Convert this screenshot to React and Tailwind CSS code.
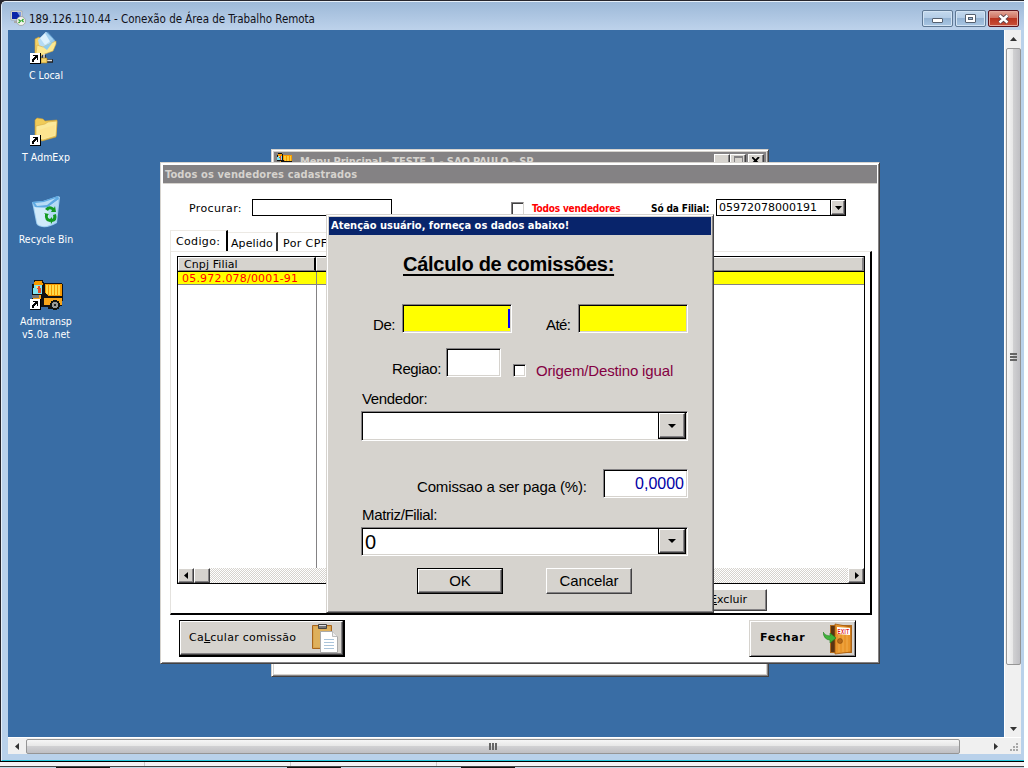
import React from "react";

const raised =
  "border border-t-white border-l-white border-r-[#424142] border-b-[#424142] shadow-[inset_-1px_-1px_0_#848284] bg-[#d6d3ce]";
const frame =
  "border border-t-[#d6d3ce] border-l-[#d6d3ce] border-r-[#424142] border-b-[#424142] shadow-[inset_1px_1px_0_#fff,inset_-1px_-1px_0_#848284]";
const sunken =
  "border border-t-[#848284] border-l-[#848284] border-r-white border-b-white shadow-[inset_1px_1px_0_#000,inset_-1px_-1px_0_#d6d3ce]";
const tahoma = "font-['DejaVu_Sans_Condensed','DejaVu_Sans',sans-serif]";
const verdana = "font-['DejaVu_Sans',sans-serif]";
const arial = "font-['Liberation_Sans',Arial,sans-serif]";

function ShortcutArrow() {
  return (
    <g shapeRendering="crispEdges">
      <path d="M0 21h11v11H0z" fill="#000" />
      <path d="M0 21h10v10H0z" fill="#fff" />
      <path d="M3 23h5v5h-1v-2h-1v1h-1v1h-1v2h-2v-3h1v-1h1v-1h1v-1h-2z" fill="#000" />
    </g>
  );
}

function NetworkFolderIcon() {
  return (
    <svg width="32" height="32" viewBox="0 0 32 32" className="overflow-visible">
      <path d="M5 7l4-2 3 3v12l3 2-5 3-5-3z" fill="#f3d268" stroke="#c99b32" strokeWidth=".6" />
      <path d="M8 8L16 0l9 9-3 7-12 1z" fill="#b5dcf5" />
      <path d="M10 6l6-6 7 7-8 6z" fill="#def2fd" />
      <path d="M15 1l3-1 7 8-3 5z" fill="#7fbdea" opacity=".6" />
      <path d="M7 13l6 2 13-6v3l-3 7-11 4-6-1z" fill="#fbe892" stroke="#d9ad45" strokeWidth=".6" />
      <path d="M13 15l10-5-6 8z" fill="#8ecbee" />
      <path d="M14 23v4M11 29h12" stroke="#222" strokeWidth="3.600" />
      <path d="M14 22v5M12 28.500h10" stroke="#ddd" strokeWidth="1.600" />
      <path d="M11 26h6v5h-6z" fill="#f5d468" stroke="#a87916" strokeWidth=".6" />
      <ShortcutArrow />
    </svg>
  );
}

function FolderIcon() {
  return (
    <svg width="32" height="32" viewBox="0 0 32 32" className="overflow-visible">
      <path d="M5 6l2-2 6 1 2 2 12-1v3l-1 14-14 4-7-4z" fill="#f0cb58" stroke="#c99b32" strokeWidth=".6" />
      <path d="M6 12l9-2 3-2 9-1-1 15-13 4-7-2z" fill="#fbe99a" stroke="#d5ab43" strokeWidth=".6" />
      <path d="M9 16l16-5-1 10-12 4z" fill="#fce08a" opacity=".7" />
      <ShortcutArrow />
    </svg>
  );
}

function RecycleIcon() {
  return (
    <svg width="32" height="32" viewBox="0 0 32 32" className="overflow-visible">
      <path d="M2 6l11-1L28 0l2 1-3 26q-8 5-15 4-6-1-6-5z" fill="#9dcdf0" />
      <path d="M2 6l11-1L28 0l1 3-11 8-12 1z" fill="#5ea9e2" />
      <path d="M5 7l9-1 12-4-9 7-10 1z" fill="#b8dcf6" />
      <path d="M4 11l13 1 11-8-2 22q-8 5-14 4-5-1-5-4z" fill="#d9eefb" opacity=".85" />
      <path d="M18 12l10-8-2 22-6 3z" fill="#aed6f3" opacity=".8" />
      <path d="M15 13q4-5 9-1l1-2 1 6-5 0 1-2q-3-2-4 1zM14 17l5 1-1 1q-1 3 2 4v3q-6-1-5-8zM26 18q2 7-4 8v2l-3-4 3-3v2q2-1 1-4z" fill="#149a22" />
    </svg>
  );
}

function TruckArt() {
  return (
    <g>
      <path d="M3 0h9v2h1v1h18v1h1v17h-1v5h-3v3H17v-2H1V4h2z" fill="#111" />
      <path d="M4 1h7v2h1v2H3V2h1z" fill="#f79a00" />
      <path d="M3 5h8v9H2V8h1z" fill="#7fe3f0" />
      <path d="M6 6h3v2h1v5H7V9H6z" fill="#e44b2a" />
      <path d="M5 6h2v2H5z" fill="#ffe27a" />
      <path d="M14 4h17v12H18l-4-3z" fill="#f79a00" />
      <path d="M16 5v9M19 5v10M22 5v10M25 5v10M28 5v10" stroke="#ffdc4a" strokeWidth="1.5" />
      <path d="M2 15h8v11H2zM13 18h18v7H13z" fill="#f7a51a" />
      <path d="M1 15h7v3H1z" fill="#777" />
      <circle cx="24" cy="25" r="5" fill="#111" />
      <circle cx="24" cy="25" r="3" fill="#999" />
      <circle cx="24" cy="25" r="1.3" fill="#222" />
    </g>
  );
}

function TruckIcon() {
  return (
    <svg width="32" height="32" viewBox="0 0 32 32" shapeRendering="crispEdges" className="overflow-visible">
      <g transform="translate(1 2)">
        <TruckArt />
      </g>
      <ShortcutArrow />
    </svg>
  );
}

function ClipboardIcon() {
  return (
    <svg width="28" height="32" viewBox="0 0 28 32">
      <path d="M1.500 3.500h19v23h-19z" fill="#d9a550" stroke="#a8651c" />
      <path d="M3 5h16v20H3z" fill="#deb05c" />
      <path d="M7.500 2.500h8v4h-8z" fill="#777" stroke="#444" />
      <path d="M8 3h7v1H8z" fill="#ddd" />
      <path d="M9.500 9.500h12l5 5v16h-17z" fill="#fff" stroke="#aaa" />
      <path d="M21.500 9.500v5h5" fill="#eee" stroke="#bbb" />
      <path d="M13 17.500h10M13 20.500h10M13 23.500h10M13 26.500h10" stroke="#aac4da" />
    </svg>
  );
}

function ExitDoorIcon() {
  return (
    <svg width="30" height="32" viewBox="0 0 30 32">
      <path d="M7 2h22v28H7z" fill="#b06a1c" />
      <path d="M8 3h6v26H8z" fill="#5a3413" />
      <path d="M12 1l16 3v25l-16 2z" fill="#e8952b" stroke="#a55a10" strokeWidth=".8" />
      <path d="M16 5v24M20 5v24M24 5v24" stroke="#f2ad4d" strokeWidth="1" />
      <path d="M14 4l13 1v7l-13-1z" fill="#fff" />
      <text x="14.500" y="10.500" fontSize="6.500" fontWeight="bold" fill="#e01818" textLength="12" lengthAdjust="spacingAndGlyphs" fontFamily="Liberation Sans, sans-serif">EXIT</text>
      <circle cx="17" cy="18" r="2.500" fill="#b86a18" stroke="#7a4208" strokeWidth=".5" />
      <path d="M0 9q2 4 7 4v-3l6 5-6 5v-3Q1 17 0 9z" fill="#3fb33a" stroke="#1f7d1d" strokeWidth=".6" />
    </svg>
  );
}

function RemoteIcon() {
  return (
    <svg width="16" height="16" viewBox="0 0 16 16" className="mt-[3px]">
      <path d="M1 1h11v9H1z" fill="#e7e7e2" stroke="#999" strokeWidth=".6" />
      <path d="M2 2h9v7H2z" fill="#0a24a8" />
      <path d="M7 2h4v6z" fill="#7f9be0" />
      <path d="M4 11h5v2H4z" fill="#aaa" />
      <circle cx="11" cy="11" r="4.500" fill="#f3f3ee" stroke="#888" strokeWidth=".6" />
      <path d="M8.500 9.500l2 1.500-2 2M13.500 9L12 10.500l1.500 1.500" fill="none" stroke="#27a327" strokeWidth="1.200" />
    </svg>
  );
}

function Triangle({ dir, className = "" }) {
  const d = {
    left: "M5 0v7L1 3.500z",
    right: "M2 0v7l4-3.500z",
    up: "M0 5h7L3.500 1z",
    down: "M0 2h7L3.500 6z",
  }[dir];
  return (
    <svg width="7" height="7" viewBox="0 0 7 7" className={className}>
      <path d={d} fill="currentColor" />
    </svg>
  );
}

function DesktopItem({ icon, children }) {
  return (
    <div className={`flex h-[82px] w-[76px] flex-col items-center text-center text-[10.5px] leading-[13px] text-white ${tahoma}`}>
      {icon}
      <div className="mt-[5px] whitespace-nowrap">{children}</div>
    </div>
  );
}

function MenuWindow() {
  return (
    <div className={`absolute top-[119px] left-[263px] h-[528px] w-[498px] bg-white p-px ${frame}`}>
      <div className="flex h-full flex-col border border-[#d6d3ce]">
        <div className="flex h-[18px] shrink-0 bg-[#848284]">
          <svg width="16" height="16" viewBox="0 0 32 32" className="mt-px ml-[2px]" shapeRendering="crispEdges">
            <TruckArt />
          </svg>
          <div className={`ml-[8px] flex-1 text-[11px] leading-[20px] font-bold tracking-[-0.1px] whitespace-nowrap text-[#d6d3ce] ${tahoma}`}>
            Menu Principal - TESTE 1 - SAO PAULO - SP
          </div>
          <div className={`mt-[2px] h-[14px] w-[16px] ${raised}`} />
          <div className={`mt-[2px] flex h-[14px] w-[16px] justify-center pt-px ${raised}`}>
            <div className="h-[9px] w-[9px] border border-t-2 border-[#848284]" />
          </div>
          <div className={`mt-[2px] mr-[2px] ml-[2px] flex h-[14px] w-[16px] justify-center pt-[2px] ${raised}`}>
            <svg width="8" height="7" viewBox="0 0 8 7">
              <path d="M0 0l7 7M7 0L0 7" stroke="#000" strokeWidth="1.8" />
            </svg>
          </div>
        </div>
      </div>
    </div>
  );
}

function GridScroll() {
  return (
    <div className="flex h-[15px] bg-[repeating-conic-gradient(#d6d3ce_0_25%,#fff_0_50%)] bg-size-[2px_2px]">
      <div className={`flex w-[16px] items-center justify-center ${raised}`}><Triangle dir="left" /></div>
      <div className={`w-[16px] ${raised}`} />
      <div className="flex-1" />
      <div className={`flex w-[16px] items-center justify-center ${raised}`}><Triangle dir="right" /></div>
    </div>
  );
}

function SellersWindow() {
  return (
    <div className={`absolute top-[132px] left-[152px] flex h-[502px] w-[720px] flex-col bg-white p-[2px] ${frame}`}>
      <div className={`h-[19px] shrink-0 border-b border-[#d6d3ce] bg-[#848284] pl-[2px] text-[11px] leading-[19px] font-bold tracking-[0.12px] text-[#d6d3ce] ${tahoma}`}>
        Todos os vendedores cadastrados
      </div>
      <div className="mt-[15px] flex h-[17px] shrink-0 whitespace-nowrap">
        <div className={`w-[63px] shrink-0 pt-[3px] pl-[26px] text-[11px] leading-[14px] tracking-[0.35px] ${verdana}`}>
          Procurar:
        </div>
        <div className="ml-[26px] h-[17px] w-[140px] border border-black" />
        <div className="mt-[3px] ml-[119px] h-[13px] w-[13px] border border-t-[#848284] border-r-[#d6d3ce] border-b-[#d6d3ce] border-l-[#848284] shadow-[inset_1px_1px_0_#424142]" />
        <div className={`ml-[8px] w-[119px] pt-[3px] text-[10px] leading-[14px] font-bold tracking-[-0.2px] text-[#f00] ${tahoma}`}>
          Todos vendedores
        </div>
        <div className={`w-[65px] pt-[3px] text-[10px] leading-[14px] font-bold tracking-[-0.1px] ${tahoma}`}>
          Só da Filial:
        </div>
        <div className="flex h-[17px] w-[130px] border border-black">
          <div className={`flex-1 pl-[2px] text-[11px] leading-[15px] ${verdana}`}>05972078000191</div>
          <div className="w-[15px] border-l border-black">
            <div className={`flex h-full items-center justify-center ${raised}`}>
              <Triangle dir="down" />
            </div>
          </div>
        </div>
      </div>
      <div className={`mt-[14px] ml-[7px] flex h-[21px] shrink-0 items-end text-[11px] whitespace-nowrap ${verdana}`}>
        <div className="h-[21px] w-[58px] border-t border-r-2 border-l border-t-[#ece9e4] border-r-black border-l-[#ece9e4] pl-[5px] leading-[21px] tracking-[0.35px]">
          Codigo:
        </div>
        <div className="h-[19px] w-[50px] border-t border-r-2 border-t-[#ece9e4] border-r-[#333] pl-[3px] leading-[21px] tracking-[0.1px]">Apelido</div>
        <div className="h-[19px] w-[60px] border-t border-t-[#ece9e4] pl-[5px] leading-[21px] tracking-[0.4px]">Por CPF:</div>
      </div>
      <div className="mr-[5px] ml-[7px] flex h-[364px] shrink-0 flex-col border-t border-r-2 border-b-2 border-l border-t-[#ece9e4] border-r-black border-b-black border-l-[#e4e2de] pt-[4px] pr-[5px] pl-[6px]">
        <div className="flex h-[328px] shrink-0 flex-col border border-black">
          <div className={`flex h-[15px] shrink-0 border-b border-black text-[11px] leading-[13px] ${verdana}`}>
            <div className="w-[138px] overflow-hidden border border-r-2 border-white border-r-black border-b-[#848284] bg-[#d6d3ce] pl-[5px] tracking-[0.1px]">Cnpj Filial</div>
            <div className="flex-1 border border-r-2 border-white border-r-[#848284] border-b-[#848284] bg-[#d6d3ce]" />
          </div>
          <div className={`flex h-[13px] shrink-0 border-b border-[#848284] bg-[#ff0] pl-[4px] text-[11px] leading-[13px] tracking-[0.2px] text-[#f00] ${verdana}`}>
            <div className="w-[135px] border-r border-[#848284]">05.972.078/0001-91</div>
          </div>
          <div className="w-[139px] flex-1 border-r border-[#848284]" />
          <GridScroll />
        </div>
        <div className={`mt-[5px] mr-[98px] ml-auto flex h-[22px] w-[90px] shrink-0 items-center justify-end pr-[19px] text-[11px] ${verdana} ${raised}`}>
          <span><u>E</u>xcluir</span>
        </div>
      </div>
      <div className="mt-[5px] flex h-[37px] shrink-0 justify-between pr-[21px] pl-[16px]">
        <div className="w-[166px] border border-r-2 border-b-2 border-black">
          <div className={`flex h-full items-center justify-between pr-[3px] pl-[8px] text-[11px] tracking-[0.25px] ${verdana} ${raised}`}>
            <span>Ca<u>L</u>cular comissão</span>
            <ClipboardIcon />
          </div>
        </div>
        <div className={`flex w-[107px] items-center justify-between border border-[#d6d3ce] border-r-black border-b-black bg-[#d6d3ce] pr-[2px] pl-[10px] text-[11px] font-bold tracking-[0.6px] shadow-[inset_1px_1px_0_#fff,inset_-1px_-1px_0_#848284] ${verdana}`}>
          Fechar
          <ExitDoorIcon />
        </div>
      </div>
    </div>
  );
}

function Combo({ value, className }) {
  return (
    <div className={`ml-[32px] flex w-[327px] shrink-0 bg-white p-px ${sunken} ${className}`}>
      <div className="flex-1 pl-[2px] text-[20px] leading-[26px]">{value}</div>
      <div className="-mt-px w-[28px] border border-black">
        <div className={`flex h-full items-center justify-center ${raised}`}>
          <svg width="8" height="4" viewBox="0 0 8 4">
            <path d="M0 0h8L4 4z" />
          </svg>
        </div>
      </div>
    </div>
  );
}

function CommissionDialog() {
  return (
    <div className={`absolute top-[184px] left-[318px] flex h-[399px] w-[388px] flex-col bg-[#d6d3ce] p-[2px] text-[15px] leading-[18px] tracking-[-0.15px] whitespace-nowrap text-black ${arial} ${frame}`}>
      <div className={`h-[18px] shrink-0 bg-[#08246b] pl-[2px] text-[11px] leading-[18px] font-bold tracking-[0px] text-white ${tahoma}`}>
        Atenção usuário, forneça os dados abaixo!
      </div>
      <div className="mt-[17px] ml-[74px] h-[25px] shrink-0 text-[20px] leading-[25px] font-bold tracking-[-0.27px] underline decoration-2 underline-offset-[3px]">
        Cálculo de comissões:
      </div>
      <div className="mt-[27px] flex h-[29px] shrink-0 pl-[44px]">
        <div className="w-[29px] pt-[12px] tracking-[-0.4px]">De:</div>
        <div className={`flex w-[110px] items-center justify-end bg-[#ff0] pr-px ${sunken}`}>
          <div className="h-[19px] w-[2px] bg-[#00f]" />
        </div>
        <div className="ml-[34px] w-[32px] pt-[12px] tracking-[-0.6px]">Até:</div>
        <div className={`w-[110px] bg-[#ff0] ${sunken}`} />
      </div>
      <div className="mt-[15px] flex h-[29px] shrink-0 pl-[63px]">
        <div className="w-[54px] pt-[12px] tracking-[-0.4px]">Regiao:</div>
        <div className={`w-[55px] bg-white ${sunken}`} />
        <div className={`mt-[16px] ml-[12px] h-[13px] w-[13px] bg-white ${sunken}`} />
        <div className="ml-[10px] pt-[14px] text-[#840042]">Origem/Destino igual</div>
      </div>
      <div className="mt-[13px] h-[18px] shrink-0 pl-[33px] tracking-[-0.35px]">Vendedor:</div>
      <Combo value="" className="mt-[3px] h-[30px]" />
      <div className="mt-[28px] flex h-[29px] shrink-0 pl-[88px]">
        <div className="w-[186px] pt-[9px]">Comissao a ser paga (%):</div>
        <div className={`w-[85px] bg-white pr-[3px] text-right text-[16px] leading-[28px] tracking-normal text-[#0000a5] ${sunken}`}>0,0000</div>
      </div>
      <div className="mt-[8px] h-[18px] shrink-0 pl-[33px] tracking-[-0.35px]">Matriz/Filial:</div>
      <Combo value="0" className="mt-[3px] h-[29px]" />
      <div className="mt-[12px] flex h-[26px] shrink-0 gap-[43px] pl-[88px]">
        <div className="w-[86px] border border-black">
          <div className={`flex h-full items-center justify-center ${raised}`}>OK</div>
        </div>
        <div className={`flex w-[86px] items-center justify-center ${raised}`}>Cancelar</div>
      </div>
    </div>
  );
}

function CaptionButton({ close, children }) {
  const tone = close
    ? "border-[#5a1420] bg-[linear-gradient(#e2a596,#cf6f5e_48%,#b93420_50%,#c9503a)] shadow-[inset_0_0_0_1px_#e5a99d]"
    : "border-[#5f7894] bg-[linear-gradient(#c4d9ee,#b3cce6_48%,#94b3d3_50%,#a9c6e3)] shadow-[inset_0_0_0_1px_#d3e4f4]";
  return <div className={`flex h-[17px] w-[31px] items-center justify-center rounded-[2px] border ${tone}`}>{children}</div>;
}

function TitleBar() {
  return (
    <div className="flex h-[28px] shrink-0 items-center bg-[linear-gradient(#9db9d8,#bdd2eb)] pr-[5px] pl-[8px]">
      <RemoteIcon />
      <div className={`ml-[3px] flex-1 pt-[5px] text-[11.5px] leading-[14px] tracking-[-0.03px] text-[#101018] ${tahoma}`}>
        189.126.110.44 - Conexão de Área de Trabalho Remota
      </div>
      <div className="flex gap-[2px] pt-[5px]">
        <CaptionButton>
          <div className="mt-[4px] h-[5px] w-[11px] rounded-[1px] border border-[#55606f] bg-white" />
        </CaptionButton>
        <CaptionButton>
          <div className="flex h-[9px] w-[11px] items-center justify-center rounded-[1px] border border-[#55606f] bg-white">
            <div className="h-[3px] w-[5px] border border-[#55606f] bg-[#9db9d8]" />
          </div>
        </CaptionButton>
        <CaptionButton close>
          <svg width="13" height="10" viewBox="0 0 13 10">
            <path d="M2.500 1.500l8 7M10.500 1.500l-8 7" stroke="#55404a" strokeWidth="4.200" />
            <path d="M2.500 1.500l8 7M10.500 1.500l-8 7" stroke="#fff" strokeWidth="2.400" />
          </svg>
        </CaptionButton>
      </div>
    </div>
  );
}

function VerticalScroll() {
  return (
    <div className="flex w-[17px] flex-col items-center border-l border-white bg-[#f0f0f0] text-[#333]">
      <div className="flex h-[18px] shrink-0 items-center"><Triangle dir="up" /></div>
      <div className="flex h-[617px] w-[15px] shrink-0 flex-col items-center justify-center gap-px rounded-[2px] border border-[#959595] bg-[linear-gradient(90deg,#f6f6f6,#e6e6e6_48%,#d0d0d2_50%,#bfbfc3)]">
        <div className="h-[2px] w-[7px] bg-[#666]" />
        <div className="h-[2px] w-[7px] bg-[#666]" />
        <div className="h-[2px] w-[7px] bg-[#666]" />
      </div>
      <div className="flex-1" />
      <div className="flex h-[18px] shrink-0 items-center"><Triangle dir="down" /></div>
    </div>
  );
}

function HorizontalScroll() {
  return (
    <div className="flex h-[17px] shrink-0 items-center border-t border-white bg-[#f0f0f0] text-[#333]">
      <div className="flex w-[18px] shrink-0 justify-center"><Triangle dir="left" /></div>
      <div className="flex h-[15px] w-[934px] shrink-0 items-center justify-center gap-px rounded-[2px] border border-[#959595] bg-[linear-gradient(#f6f6f6,#e6e6e6_48%,#d0d0d2_50%,#bfbfc3)]">
        <div className="h-[7px] w-[2px] bg-[#666]" />
        <div className="h-[7px] w-[2px] bg-[#666]" />
        <div className="h-[7px] w-[2px] bg-[#666]" />
      </div>
      <div className="flex-1" />
      <div className="flex w-[18px] justify-center"><Triangle dir="right" /></div>
      <div className="flex h-full w-[17px] items-end justify-end p-[2px]">
        <svg width="9" height="9" viewBox="0 0 9 9" fill="#a8a8a8">
          <path d="M6 0h2v2H6zM3 3h2v2H3zM6 3h2v2H6zM0 6h2v2H0zM3 6h2v2H3zM6 6h2v2H6z" />
        </svg>
      </div>
    </div>
  );
}

function BottomStrip() {
  return (
    <div className="flex h-[6px] flex-col bg-[#f4f2f4]">
      <div className="flex h-[4px]">
        <div className="w-[145px] border-r border-[#ccc]" />
        <div className="w-[146px] border-r border-[#ccc]" />
        <div className="w-[146px] border-r border-[#ccc]" />
      </div>
      <div className="flex h-[2px] border-t border-[#444] bg-[#c5d7e6]">
        <div className="ml-[56px] w-[54px] bg-[#111]" />
        <div className="ml-[177px] w-[54px] bg-[#111]" />
        <div className="ml-[120px] w-[54px] bg-[#111]" />
      </div>
    </div>
  );
}

export default function App() {
  return (
    <div className="h-[768px] w-[1028px] overflow-hidden bg-white">
      <div className="flex h-[768px] w-[1024px] flex-col bg-[#26252c]">
        <div className="flex h-[762px] flex-col border-b border-black pt-px pl-px">
          <div className="flex h-[760px] flex-col overflow-hidden rounded-tl-[5px] border-t border-b border-l border-t-[#e6eff8] border-b-[#22c8dc] border-l-[#e6eff8] bg-[#b9d1ea]">
            <TitleBar />
            <div className="mr-[3px] ml-[6px] flex h-[707px] shrink-0">
              <div className="relative w-[996px] overflow-hidden bg-[#396da5] pt-[2px]">
                <DesktopItem icon={<NetworkFolderIcon />}>C Local</DesktopItem>
                <DesktopItem icon={<FolderIcon />}>T AdmExp</DesktopItem>
                <DesktopItem icon={<RecycleIcon />}>Recycle Bin</DesktopItem>
                <DesktopItem icon={<TruckIcon />}>Admtransp<br />v5.0a .net</DesktopItem>
                <MenuWindow />
                <SellersWindow />
                <CommissionDialog />
              </div>
              <VerticalScroll />
            </div>
            <div className="mr-[3px] ml-[6px]">
              <HorizontalScroll />
            </div>
          </div>
        </div>
        <BottomStrip />
      </div>
    </div>
  );
}
